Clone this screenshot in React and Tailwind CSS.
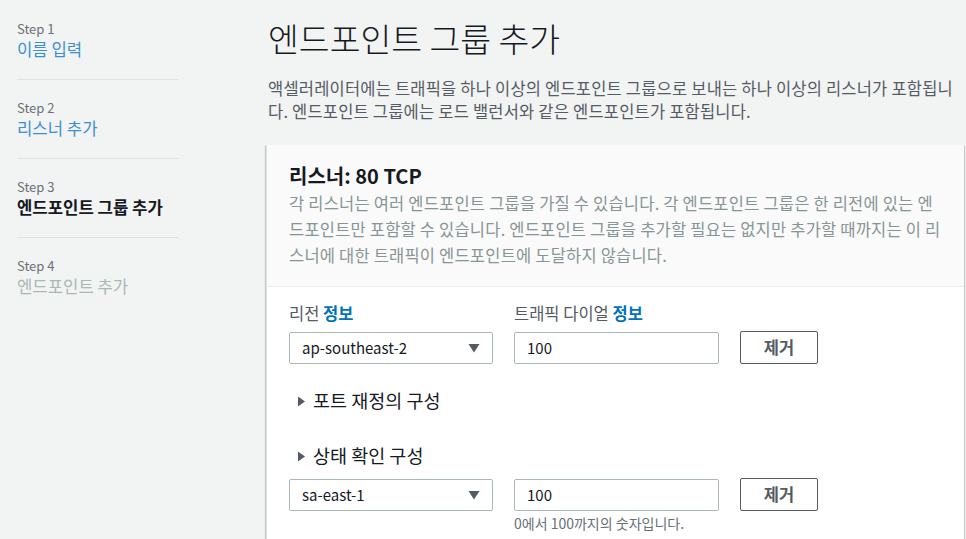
import React from "react";

const steps = [
    { step: "Step 1", label: "이름 입력", state: "done" },
    { step: "Step 2", label: "리스너 추가", state: "done" },
    { step: "Step 3", label: "엔드포인트 그룹 추가", state: "active" },
    { step: "Step 4", label: "엔드포인트 추가", state: "todo" },
];

function Caret() {
    return (
        <svg width="12" height="10" viewBox="0 0 12 10" className="text-[#545b64]">
            <path d="M0.5 1 L11.5 1 L6 9.5 Z" fill="currentColor" />
        </svg>
    );
}

function Expander({ children }) {
    return (
        <div className="flex items-center gap-[8px] h-[24px] pl-[9px] text-[18.5px] text-[#16191f]">
            <svg width="7" height="11" viewBox="0 0 7 11">
                <path d="M0 0.5 L7 5.5 L0 10.5 Z" fill="#545b64" />
            </svg>
            <span>{children}</span>
        </div>
    );
}

function Row({ region, helper }) {
    return (
        <div className="flex items-start gap-[21px]">
            <div className="w-[204px] h-[32px] bg-white border border-[#aab7b8] rounded-[2px] flex items-center justify-between pl-[12px] pr-[12px] text-[15px] text-[#16191f]">
                <span>{region}</span>
                <Caret />
            </div>
            <div className="flex flex-col">
                <div className="w-[205px] h-[32px] bg-white border border-[#aab7b8] rounded-[2px] flex items-center pl-[12px] text-[15px] text-[#16191f]">
                    100
                </div>
                {helper && (
                    <div className="text-[14px] leading-[16px] mt-[4px] text-[#687078]">{helper}</div>
                )}
            </div>
            <button className="w-[78px] h-[33px] -mt-[1px] border border-[#545b64] rounded-[2px] bg-white text-[16.5px] font-bold text-[#545b64] flex items-center justify-center">
                제거
            </button>
        </div>
    );
}

export default function App() {
    return (
        <div
            className="w-[966px] h-[539px] overflow-hidden bg-[#f2f3f3] flex"
            style={{ fontFamily: '"Noto Sans CJK KR", sans-serif' }}
        >
            {/* Sidebar */}
            <div className="w-[268px] shrink-0 pl-[17px]">
                <div className="w-[161px] pt-[20px]">
                    {steps.map((s, i) => (
                        <div
                            key={s.step}
                            className={
                                (i === 0 ? "pt-0 " : "pt-[19px] ") +
                                (i < steps.length - 1 ? "pb-[19px] border-b border-[#dfe2e2]" : "")
                            }
                        >
                            <div className="text-[13px] leading-[18px] text-[#687078]">{s.step}</div>
                            <div
                                className={
                                    "text-[16.7px] leading-[22px] whitespace-nowrap " +
                                    (s.state === "done"
                                        ? "text-[#3b8fd4]"
                                        : s.state === "active"
                                        ? "text-[#16191f] font-bold"
                                        : "text-[#aab7b8]")
                                }
                            >
                                {s.label}
                            </div>
                        </div>
                    ))}
                </div>
            </div>

            {/* Main */}
            <div className="flex-1 pr-[2px] pt-[16px] min-w-0">
                <h1 className="text-[33.5px] leading-[44px] font-light text-[#16191f]">
                    엔드포인트 그룹 추가
                </h1>
                <p className="mt-[17px] text-[16.5px] leading-[23px] tracking-[0.2px] text-[#545b64]">
                    액셀러레이터에는 트래픽을 하나 이상의 엔드포인트 그룹으로 보내는 하나 이상의 리스너가 포함됩니다. 엔드포인트 그룹에는 로드 밸런서와 같은 엔드포인트가 포함됩니다.
                </p>

                {/* Card */}
                <div className="mt-[22px] -ml-[2px] bg-white border-l border-[#dfe2e2] shadow-[0_1px_1px_0_rgba(0,28,36,0.3),1px_1px_1px_0_rgba(0,28,36,0.15),-1px_1px_1px_0_rgba(0,28,36,0.15)]">
                    <div className="bg-[#fafafa] border-b border-[#eaeded] px-[22px] pt-[19px] pb-[18px]">
                        <h2 className="text-[20px] leading-[24px] font-bold text-[#16191f]">리스너: 80 TCP</h2>
                        <p className="mt-[2px] text-[16.5px] leading-[26px] tracking-[0.2px] text-[#879596]">
                            각 리스너는 여러 엔드포인트 그룹을 가질 수 있습니다. 각 엔드포인트 그룹은 한 리전에 있는 엔드포인트만 포함할 수 있습니다. 엔드포인트 그룹을 추가할 필요는 없지만 추가할 때까지는 이 리스너에 대한 트래픽이 엔드포인트에 도달하지 않습니다.
                        </p>
                    </div>

                    <div className="px-[22px] pt-[16px] pb-[20px]">
                        <div className="flex gap-[21px] text-[16.5px] leading-[20px] text-[#545b64]">
                            <div className="w-[204px]">
                                리전 <span className="font-bold text-[#0073bb]">정보</span>
                            </div>
                            <div>
                                트래픽 다이얼 <span className="font-bold text-[#0073bb]">정보</span>
                            </div>
                        </div>
                        <div className="mt-[9px]">
                            <Row region="ap-southeast-2" />
                        </div>
                        <div className="mt-[25px]">
                            <Expander>포트 재정의 구성</Expander>
                        </div>
                        <div className="mt-[31px]">
                            <Expander>상태 확인 구성</Expander>
                        </div>
                        <div className="mt-[11px]">
                            <Row region="sa-east-1" helper="0에서 100까지의 숫자입니다." />
                        </div>
                    </div>
                </div>
            </div>
        </div>
    );
}
